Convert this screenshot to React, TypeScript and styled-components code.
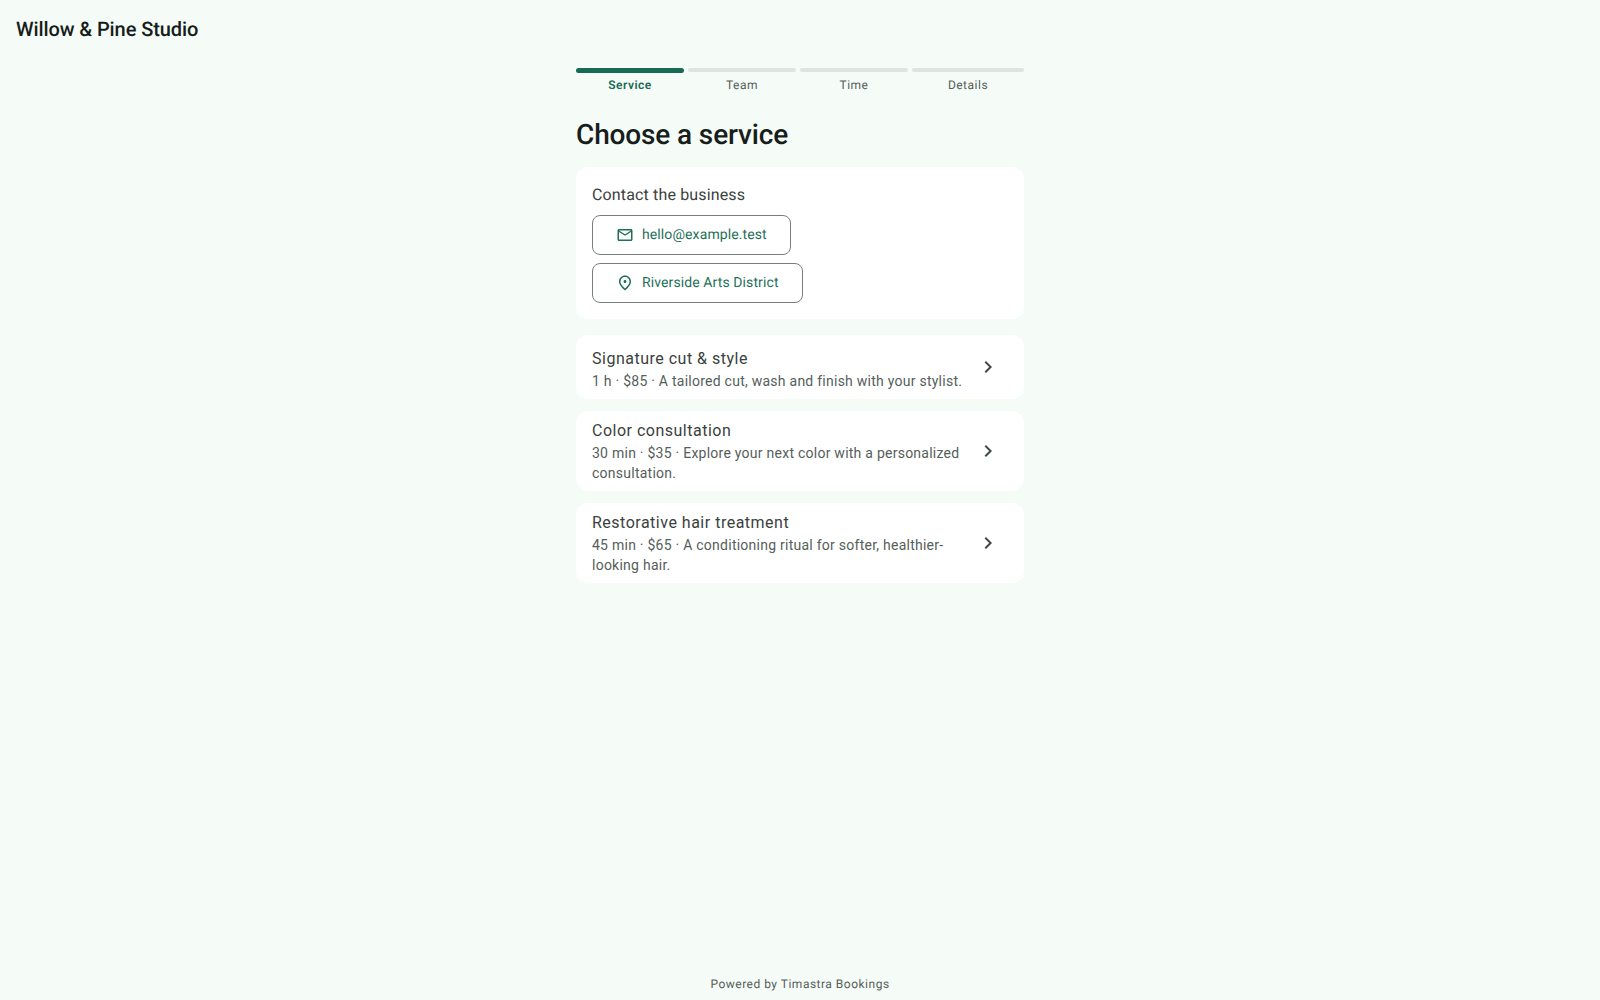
import React from 'react';
import styled, { createGlobalStyle } from 'styled-components';
import { MdChevronRight, MdOutlineMailOutline, MdOutlinePlace } from 'react-icons/md';

const GlobalStyle = createGlobalStyle`
  html, body {
    margin: 0;
    padding: 0;
    background: #f5fbf7;
  }
  * {
    box-sizing: border-box;
  }
`;

const Page = styled.div`
  min-height: 100vh;
  display: flex;
  flex-direction: column;
  font-family: Roboto, 'Liberation Sans', sans-serif;
  text-rendering: geometricPrecision;
  color: #171d1a;
`;

const Header = styled.header`
  height: 58px;
  padding: 0 16px;
  display: flex;
  align-items: center;
  font-size: 20px;
  font-weight: 500;
  letter-spacing: -0.1px;
`;

const Main = styled.main`
  flex: 1;
  width: 448px;
  margin: 0 auto;
  padding-top: 10px;
`;

const Stepper = styled.ol`
  list-style: none;
  margin: 0;
  padding: 0;
  display: grid;
  grid-template-columns: 108px 108px 108px 112px;
  column-gap: 4px;
`;

const Step = styled.li<{ $active?: boolean }>`
  text-align: center;
  font-size: 12px;
  line-height: 16px;
  letter-spacing: 0.5px;
  font-weight: ${({ $active }) => ($active ? 600 : 400)};
  color: ${({ $active }) => ($active ? '#176b55' : '#555e5a')};

  &::before {
    content: '';
    display: block;
    height: ${({ $active }) => ($active ? 5 : 4)}px;
    margin-bottom: ${({ $active }) => ($active ? 4 : 5)}px;
    border-radius: 3px;
    background: ${({ $active }) => ($active ? '#176b55' : '#dee4e0')};
  }
`;

const Title = styled.h1`
  margin: 24px 0 14px;
  font-size: 28px;
  line-height: 36px;
  font-weight: 500;
  letter-spacing: -0.13px;
`;

const ContactCard = styled.section`
  background: #fff;
  border-radius: 12px;
  padding: 16px;
  margin-bottom: 16px;
`;

const ContactTitle = styled.div`
  font-size: 16px;
  line-height: 24px;
  letter-spacing: 0.15px;
  color: #3a413e;
  margin-bottom: 8px;
`;

const ContactList = styled.div`
  display: flex;
  flex-direction: column;
  align-items: flex-start;
  gap: 8px;
`;

const ContactButton = styled.a`
  height: 40px;
  padding: 0 23px;
  display: inline-flex;
  align-items: center;
  gap: 8px;
  border: 1px solid #767f7c;
  border-radius: 8px;
  color: #1f7059;
  font-size: 14px;
  letter-spacing: 0.1px;
  text-decoration: none;

  svg {
    width: 18px;
    height: 18px;
    flex: none;
  }
`;

const ServiceList = styled.div`
  display: flex;
  flex-direction: column;
  gap: 12px;
`;

const ServiceRow = styled.button`
  width: 100%;
  min-height: 64px;
  padding: 0 24px 0 16px;
  display: flex;
  align-items: center;
  gap: 12px;
  border: none;
  border-radius: 12px;
  background: #fff;
  font: inherit;
  text-align: left;
  color: inherit;

  svg {
    width: 24px;
    height: 24px;
    flex: none;
    color: #3f4945;
  }
`;

const ServiceText = styled.div`
  flex: 1;
  min-width: 0;
  align-self: flex-end;
  padding: 8px 0;
`;

const ServiceName = styled.div`
  font-size: 16px;
  line-height: 24px;
  letter-spacing: 0.5px;
  color: #3a413e;
`;

const ServiceMeta = styled.div`
  font-size: 14px;
  line-height: 20px;
  letter-spacing: 0.25px;
  color: #555e5a;
`;

const Footer = styled.footer`
  padding: 8px 0 8px;
  text-align: center;
  font-size: 12px;
  line-height: 16px;
  letter-spacing: 0.5px;
  color: #555e5a;
`;

const steps = ['Service', 'Team', 'Time', 'Details'];

const services = [
  { name: 'Signature cut & style', meta: '1 h · $85 · A tailored cut, wash and finish with your stylist.' },
  { name: 'Color consultation', meta: '30 min · $35 · Explore your next color with a personalized consultation.' },
  { name: 'Restorative hair treatment', meta: '45 min · $65 · A conditioning ritual for softer, healthier-looking hair.' }
];

export default function App() {
  return (
    <Page>
      <GlobalStyle />
      <Header>Willow &amp; Pine Studio</Header>
      <Main>
        <Stepper>
          {steps.map((step, i) => (
            <Step key={step} $active={i === 0}>
              {step}
            </Step>
          ))}
        </Stepper>
        <Title>Choose a service</Title>
        <ContactCard>
          <ContactTitle>Contact the business</ContactTitle>
          <ContactList>
            <ContactButton href='#'>
              <MdOutlineMailOutline />
              hello@example.test
            </ContactButton>
            <ContactButton href='#'>
              <MdOutlinePlace />
              Riverside Arts District
            </ContactButton>
          </ContactList>
        </ContactCard>
        <ServiceList>
          {services.map(service => (
            <ServiceRow key={service.name}>
              <ServiceText>
                <ServiceName>{service.name}</ServiceName>
                <ServiceMeta>{service.meta}</ServiceMeta>
              </ServiceText>
              <MdChevronRight />
            </ServiceRow>
          ))}
        </ServiceList>
      </Main>
      <Footer>Powered by Timastra Bookings</Footer>
    </Page>
  );
}
